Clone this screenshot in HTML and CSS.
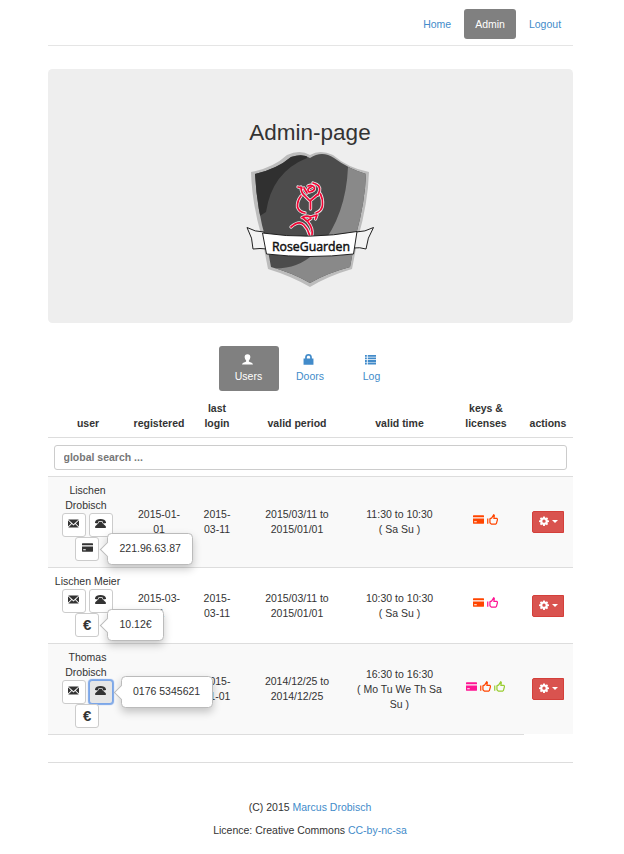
FILE: index.html
```html
<!DOCTYPE html>
<html lang="en">
<head>
<meta charset="utf-8">
<title>RoseGuarden</title>
<link rel="stylesheet" href="styles.css">
</head>
<body>
<svg class="defs" width="0" height="0">
  <symbol id="mail" viewBox="0 0 12 12"><path d="M.3 1.500h11.4L6 6.900zM0 2.500l3.500 3.400L0 9.300zM12 2.500L8.500 5.900 12 9.300zM.3 10.300l3.900-3.700L6 8.300l1.800-1.700 3.900 3.700z"/></symbol>
  <symbol id="phone" viewBox="0 0 12 12"><path d="M0 4.500C.4 2 3 1 6 1s5.600 1 6 3.500v1L9.200 6 8.300 4.500V3.500H3.700v1L2.800 6 0 5.500z"/><path d="M4.300 4.300h3.400v1L11.800 9v2H.2V9l4.100-3.700z"/></symbol>
  <symbol id="card" viewBox="0 0 12 12"><path fill-rule="evenodd" d="M.5 1.300h11q.5 0 .5.500v1.700H0V1.800q0-.5.500-.5zM0 4.900h12v5.200q0 .5-.5.500H.5Q0 10.600 0 10.100zM1.300 7.900v1.200h2.800V7.900z"/></symbol>
  <symbol id="thumb" viewBox="0 0 12 12"><path d="M.8 4.800v5.800M3.200 5.300v4.300l1.500 1.400h4.800l.8-.8 1.200-4.400-.7-1H7.500L8 1.500 7.300.8 5.200 4.200z" fill="none" stroke="currentColor" stroke-width="1.350" stroke-linejoin="round"/></symbol>
  <symbol id="gear" viewBox="0 0 12 12"><path fill-rule="evenodd" d="M5 .5h2l.3 1.400 1 .4 1.200-.8 1.400 1.400-.8 1.200.4 1L12 5.400v1.700l-1.500.3-.4 1 .8 1.200-1.400 1.400-1.200-.8-1 .4L7 12H5l-.3-1.400-1-.4-1.200.8-1.400-1.400.8-1.200-.4-1L0 7.100V5.400l1.500-.3.4-1-.8-1.200 1.400-1.400 1.200.8 1-.4zM6 4.200a2 2 0 1 0 0 4 2 2 0 1 0 0-4z"/></symbol>
  <symbol id="user" viewBox="0 0 12 12"><path d="M6 .2c2.100 0 3.200 1.300 3.100 3.200C9 5 8.400 6.200 7.500 7c-.2.900 0 1.300.9 1.700 2.200.8 3.400 1.300 3.600 2.800H0c.2-1.500 1.400-2 3.600-2.800.9-.4 1.100-.8.9-1.700-.9-.8-1.500-2-1.600-3.600C2.800 1.500 3.900.2 6 .2z"/></symbol>
  <symbol id="lock" viewBox="0 0 12 12"><path fill-rule="evenodd" d="M2.300 4.800V3.700C2.300 1.300 3.700 0 6 0s3.700 1.300 3.700 3.700v1.100h1.700v7H.6v-7zM4.200 4.800h3.600V3.700C7.800 2.500 7.200 1.900 6 1.900s-1.800.6-1.800 1.800z"/></symbol>
  <symbol id="list" viewBox="0 0 12 12"><path d="M0 1h2v2H0zM3 1h9v2H3zM0 3.800h2v2H0zM3 3.800h9v2H3zM0 6.600h2v2H0zM3 6.600h9v2H3zM0 9.400h2v2H0zM3 9.400h9v2H3z"/></symbol>
</svg>
<div class="container">
  <nav class="topnav"><a>Home</a><a class="active">Admin</a><a>Logout</a></nav>

  <header class="hero">
    <h1>Admin-page</h1>
    <svg class="logo" viewBox="240 145 140 145" width="140" height="145">
      <defs>
        <clipPath id="shield"><path d="M255 174Q277 169 291 157Q303 153 310 158Q322 150 334 158Q349 169 366 174Q365 202 356 235L350 267Q327 273 310 283Q293 273 271 267L266 240Q257 210 255 174z"/></clipPath>
        <path id="rose" d="M301 196Q297 201 297.500 207Q299 212 305 213M316 213Q322 211 322.500 205Q323 199 320.500 194M298 187L302 188M301 187Q301 193 305 196L310 201 317 195M304 188L307 193M311 187Q306 189 309 192Q315 191 314.500 187.500Q312 184 308 186M313 183Q321 185 319.500 191L318 195M310.500 202V209M302 217.500Q307 215 310 217L317 215 315.500 219M303 217.500L307 221 311 218.500M308 222Q313 228 312 235M291 227Q299 220 304 225Q308 229 309.500 235"/>
      </defs>
      <path d="M251 172Q273 168 287 155Q300 149 310 155Q320 149 333 155Q348 168 369 172Q368 203 358 238L352 269Q328 276 310 287Q291 276 268 269L262 238Q252 204 251 172z" fill="#bcbcbc"/>
      <g clip-path="url(#shield)">
        <path d="M245 145h130v145H245z" fill="#4c4c4c"/>
        <path d="M245 150h62L307 158Q272 172 266 212L250 222z" fill="#303030"/>
        <path d="M348 167L374 173 368 290H260V267Q299 274 320 247Q346 215 348 167z" fill="#898989"/>
      </g>
      <g fill="none" stroke-linecap="round" stroke-linejoin="round">
        <use href="#rose" stroke="#ececec" stroke-width="3.300"/>
        <use href="#rose" stroke="#f00635" stroke-width="1.700"/>
      </g>
      <g fill="#f3f3f3" stroke="#222" stroke-width="1">
        <path d="M247 227.500Q255 232 264 232L267 249Q260 248 253 249 253 238 247 227.500z"/>
        <path d="M373.500 227.500Q365 232 356 232L353 248Q360 247 366 249 367 238 373.500 227.500z"/>
        <path fill="#fff" d="M262.500 233Q310 240 357 231.500L353.500 254Q310 259 266.500 254z"/>
      </g>
      <text x="272" y="250.500" textLength="78" lengthAdjust="spacingAndGlyphs" class="logo-text">RoseGuarden</text>
    </svg>
  </header>

  <nav class="tabs">
    <a class="active"><svg class="ic"><use href="#user"/></svg><span>Users</span></a>
    <a class="doors"><svg class="ic"><use href="#lock"/></svg><span>Doors</span></a>
    <a class="log"><svg class="ic"><use href="#list"/></svg><span>Log</span></a>
  </nav>

  <table>
    <colgroup><col class="c1"><col class="c2"><col class="c3"><col class="c4"><col class="c5"><col class="c6"><col class="c7"></colgroup>
    <thead>
      <tr class="head"><th>user</th><th>registered</th><th>last login</th><th>valid period</th><th>valid time</th><th>keys &amp; licenses</th><th>actions</th></tr>
      <tr class="search"><th colspan="7"><input type="text" placeholder="global search ..."></th></tr>
    </thead>
    <tbody>
      <tr class="odd tall">
        <td>Lischen<br><span class="surname">Drobisch</span>
          <div class="btns"><span class="btn"><svg class="ic"><use href="#mail"/></svg></span><span class="btn"><svg class="ic"><use href="#phone"/></svg></span></div>
          <div class="btns"><span class="btn"><svg class="ic"><use href="#card"/></svg><span class="pop">221.96.63.87</span></span></div></td>
        <td>2015-01-01</td><td>2015-03-11</td><td>2015/03/11 to 2015/01/01</td><td>11:30 to 10:30<br>( Sa Su )</td>
        <td class="keys"><svg class="ic orange"><use href="#card"/></svg><svg class="ic orange"><use href="#thumb"/></svg></td>
        <td><span class="action"><svg class="ic"><use href="#gear"/></svg><i class="caret"></i></span></td>
      </tr>
      <tr class="short">
        <td><span class="nowrap">Lischen Meier</span>
          <div class="btns"><span class="btn"><svg class="ic"><use href="#mail"/></svg></span><span class="btn"><svg class="ic"><use href="#phone"/></svg></span></div>
          <div class="btns"><span class="btn"><b class="euro">€</b><span class="pop">10.12€</span></span></div></td>
        <td>2015-03-11</td><td>2015-03-11</td><td>2015/03/11 to 2015/01/01</td><td>10:30 to 10:30<br>( Sa Su )</td>
        <td class="keys"><svg class="ic orange"><use href="#card"/></svg><svg class="ic pink"><use href="#thumb"/></svg></td>
        <td><span class="action"><svg class="ic"><use href="#gear"/></svg><i class="caret"></i></span></td>
      </tr>
      <tr class="odd tall">
        <td>Thomas<br><span class="surname">Drobisch</span>
          <div class="btns"><span class="btn"><svg class="ic"><use href="#mail"/></svg></span><span class="btn focus"><svg class="ic"><use href="#phone"/></svg><span class="pop">0176 5345621</span></span></div>
          <div class="btns"><span class="btn"><b class="euro">€</b></span></div></td>
        <td></td><td>2015-01-01</td><td>2014/12/25 to 2014/12/25</td><td>16:30 to 16:30<br>( Mo Tu We Th Sa Su )</td>
        <td class="keys"><svg class="ic pink"><use href="#card"/></svg><svg class="ic orange"><use href="#thumb"/></svg><svg class="ic green"><use href="#thumb"/></svg></td>
        <td><span class="action"><svg class="ic"><use href="#gear"/></svg><i class="caret"></i></span></td>
      </tr>
    </tbody>
  </table>
  <div class="table-end"></div>

  <footer>
    <p>(C) 2015 <a>Marcus Drobisch</a></p>
    <p>Licence: Creative Commons <a>CC-by-nc-sa</a></p>
  </footer>
</div>
</body>
</html>
```
FILE: styles.css
```css
* { box-sizing: border-box; }
body { margin: 0; background: #fff; color: #333; font: 10.5px/15px "Liberation Sans", Arial, sans-serif; }
.defs { position: absolute; }
.container { width: 525px; margin-left: 48px; }
a { color: #428bca; text-decoration: none; }
.ic { width: 11px; height: 11px; fill: currentColor; display: block; }

.topnav { display: flex; justify-content: flex-end; gap: 1.500px; height: 46px; padding: 9px 0.700px 0 0; border-bottom: 1px solid #e5e5e5; }
.topnav a { height: 30px; padding: 7.500px 11.250px; border-radius: 3px; }
.active, .topnav a.active, .tabs a.active { background: #808080; color: #fff; }

.hero { height: 254px; margin-top: 23px; padding-top: 51px; background: #eee; border-radius: 4.500px; text-align: center; }
.hero h1 { margin: 0; padding-right: 1px; font-size: 22.500px; line-height: 25px; font-weight: 500; }
.logo { display: block; margin: 0 auto 0 192px; }
.logo-text { font: 500 13.500px "Open Sans", sans-serif; fill: #111; stroke: #111; stroke-width: .5px; }

.tabs { display: flex; height: 45px; margin: 23px 0 0 171px; }
.tabs a { width: 60px; padding: 8px 1px 0 0; border-radius: 3px; display: flex; flex-direction: column; align-items: center; }
.tabs .ic { margin: 0 3px 4px 0; }
.tabs .doors { margin-left: 1px; padding-right: 0; }
.tabs .log { margin-left: 2px; }

table { width: 525px; margin-top: 7px; table-layout: fixed; border-collapse: separate; border-spacing: 0; }
.c1 { width: 80px; } .c2 { width: 62px; } .c3 { width: 54px; } .c4 { width: 106px; } .c5 { width: 99px; } .c6 { width: 74px; } .c7 { width: 50px; }
th, td { padding: 0 6px; text-align: center; vertical-align: middle; }
.head { height: 39px; }
.head th { vertical-align: bottom; padding: 0 3px 6px; }
.head th:nth-child(3), .head th:nth-child(6) { padding: 0 12px 6px; }
.search { height: 39px; }
.search th { border-top: 1px solid #ddd; }
input { display: block; width: 513px; height: 25px; padding: 0 9px 1px 8.500px; border: 1px solid #ccc; border-radius: 3px; font: bold 10.500px "Liberation Sans", sans-serif; color: #555; }
input::placeholder { color: #777; opacity: 1; }
tbody td { border-top: 1px solid #ddd; }
tbody td:first-child { padding: 0 7px 0 6px; }
tbody td:nth-child(2) { padding: 0 8px; }
.odd td { background: #f9f9f9; }
.tall { height: 91px; }
.short { height: 76px; }
.nowrap { white-space: nowrap; }
.surname { padding-right: 3px; }
.btns { display: flex; justify-content: center; gap: 3px; height: 24px; padding-right: 1px; }
.btn { position: relative; width: 24px; height: 24px; padding: 4px 0 0 5.500px; border: 1px solid #ccc; border-radius: 3px; background: #fff; text-align: left; }
.focus { background: #e6e6e6; border-color: #7ba6e8; box-shadow: 0 0 1px 1px #7ba6e8; }
.euro { display: block; font-size: 15px; line-height: 13px; margin-left: 1.500px; }
.pop { position: absolute; z-index: 2; left: 31px; top: -5px; height: 32px; padding: 7px 11.500px 0; background: #fff; border: 1px solid #bbb; border-radius: 4.500px; box-shadow: 0 4px 8px rgba(0,0,0,.22); white-space: nowrap; }
.pop::before { content: ""; position: absolute; left: -6px; top: 10px; width: 10px; height: 10px; background: #fff; border: solid #bbb; border-width: 0 0 1px 1px; transform: rotate(45deg); }
td.keys { font-size: 0; padding: 2px 7px 0 6px; }
.keys .ic { display: inline-block; margin: 0 1.500px; }
.orange { color: #ff4500; } .pink { color: #ff1493; } .green { color: #9acd32; }
.action { display: flex; align-items: center; width: 32px; height: 22px; margin-left: 3px; padding: 0 0 2px 6px; background: #d9534f; border: 1px solid #d43f3a; border-radius: 2px 0 0 2px; color: #fff; }
.action .ic { width: 10px; height: 10px; }
.caret { margin: 1px 0 0 3px; border: 3px solid transparent; border-top-color: #fff; border-bottom: 0; }
.table-end { width: 476px; border-top: 1px solid #ddd; }

footer { margin-top: 27px; padding: 37px 1px 0 0; border-top: 1px solid #ddd; text-align: center; }
footer p { margin: 0 0 8px; }
```
